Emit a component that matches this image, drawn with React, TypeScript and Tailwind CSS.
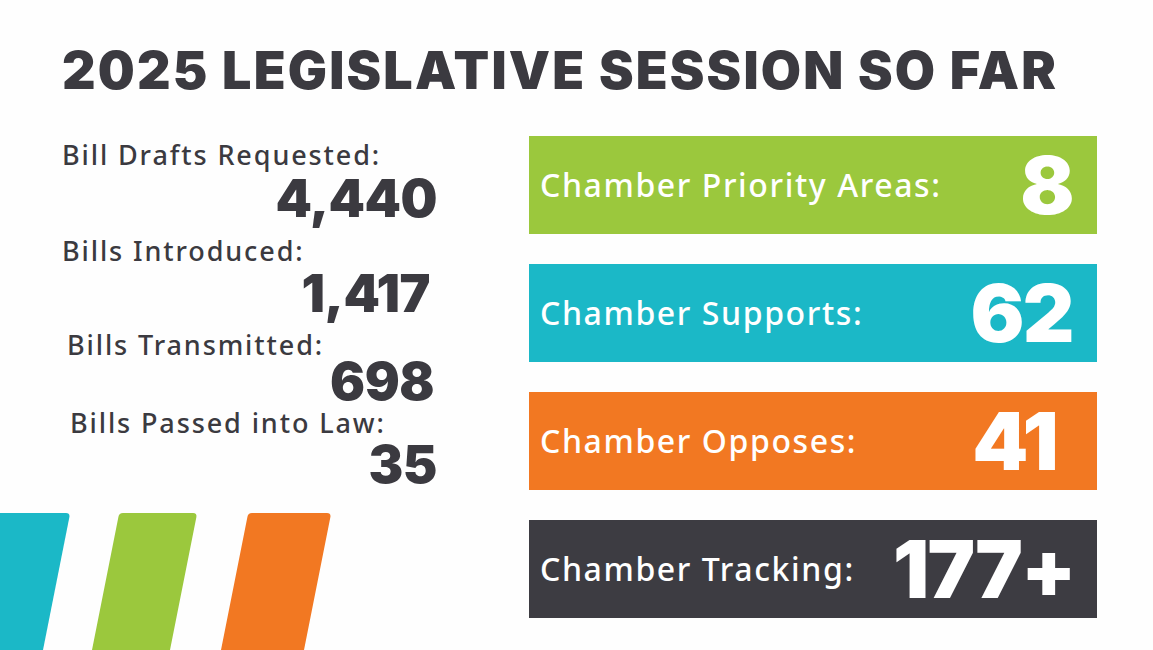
const stats = [
  { label: 'Bill Drafts Requested:', value: '4,440', labelPad: 'pl-[62px]', valuePad: 'pr-[92px]', gapTop: 'mt-[5px]', valueGap: 'mt-[5px]' },
  { label: 'Bills Introduced:', value: '1,417', labelPad: 'pl-[62px]', valuePad: 'pr-[99px]', gapTop: 'mt-[12px]', valueGap: 'mt-[4px]' },
  { label: 'Bills Transmitted:', value: '698', labelPad: 'pl-[67px]', valuePad: 'pr-[95px]', gapTop: 'mt-[11px]', valueGap: 'mt-[-2px]' },
  { label: 'Bills Passed into Law:', value: '35', labelPad: 'pl-[70px]', valuePad: 'pr-[92px]', gapTop: 'mt-[1px]', valueGap: 'mt-[3px]' },
];

const boxes = [
  { label: 'Chamber Priority Areas:', value: '8', bg: 'bg-[#9bc83d]', pr: 'pr-[24px]' },
  { label: 'Chamber Supports:', value: '62', bg: 'bg-[#1bb8c7]', pr: 'pr-[24px]' },
  { label: 'Chamber Opposes:', value: '41', bg: 'bg-[#f27822]', pr: 'pr-[40px]' },
  { label: 'Chamber Tracking:', value: '177+', bg: 'bg-[#3d3c42]', pr: 'pr-[22px]' },
];

const heavy = { fontFamily: 'Inter, "Noto Sans", sans-serif' };
const body = { fontFamily: '"Noto Sans", "Open Sans", sans-serif' };

function Stripes() {
  return (
    <svg width="340" height="137" viewBox="0 0 340 137" className="block">
      <path d="M-30 137 L-3 0 L66 0 Q70 0 69.4 4 L43 137 Z" fill="#1bb8c7" />
      <path d="M92 137 L118.4 4 Q119 0 123 0 L193 0 Q197 0 196.4 4 L170 137 Z" fill="#9bc83d" />
      <path d="M221 137 L247.4 4 Q248 0 252 0 L327 0 Q331 0 330.4 4 L304 137 Z" fill="#f27822" />
    </svg>
  );
}

export default function App() {
  return (
    <div className="w-[1153px] h-[650px] bg-[#fefefe] flex flex-col overflow-hidden text-[#3b3a40]">
      <h1 className="pt-[45px] pl-[62px] text-[52px] leading-none font-black tracking-[0.042em] whitespace-nowrap" style={heavy}>
        2025 LEGISLATIVE SESSION SO FAR
      </h1>

      <div className="flex flex-1 mt-[39px]">
        <div className="w-[529px] shrink-0 flex flex-col">
          <div className="w-[529px]">
            {stats.map((s) => (
              <div key={s.label} className="flex flex-col">
                <div className={`${s.gapTop} ${s.labelPad} text-[27px] leading-none font-medium tracking-[0.07em] whitespace-nowrap`} style={body}>
                  {s.label}
                </div>
                <div className={`${s.valueGap} ${s.valuePad} text-right text-[52px] leading-none font-black tracking-[-0.01em]`} style={heavy}>
                  {s.value}
                </div>
              </div>
            ))}
          </div>
          <div className="mt-auto">
            <Stripes />
          </div>
        </div>

        <div className="w-[568px] flex flex-col gap-[30px]">
          {boxes.map((b) => (
            <div key={b.label} className={`${b.bg} h-[98px] flex items-center justify-between pl-[11px] ${b.pr} text-white`}>
              <span className="text-[32px] leading-none font-medium tracking-[0.05em] whitespace-nowrap" style={body}>
                {b.label}
              </span>
              <span className="text-[80px] leading-none font-black tracking-[-0.02em]" style={heavy}>
                {b.value}
              </span>
            </div>
          ))}
        </div>
      </div>
    </div>
  );
}
